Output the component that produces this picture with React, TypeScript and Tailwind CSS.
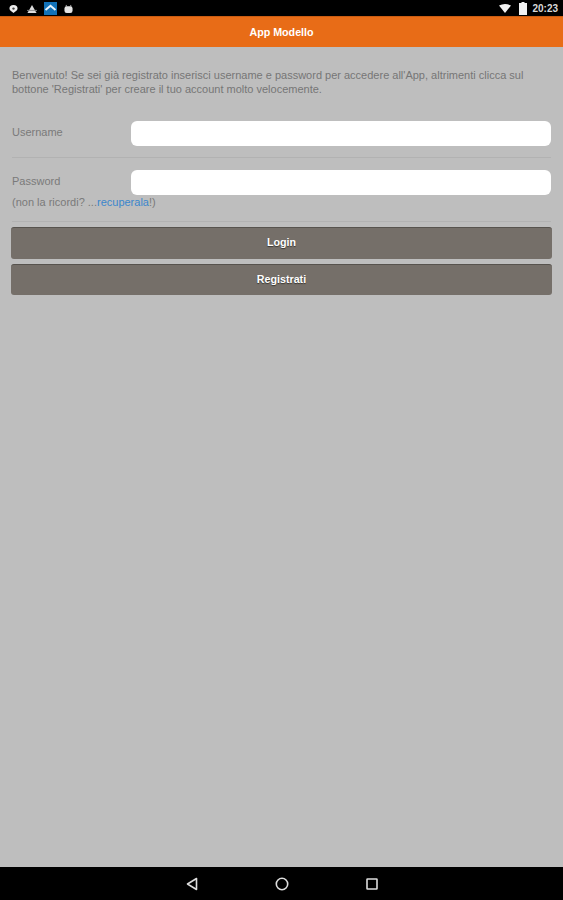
import React from 'react';

const font = 'font-["Liberation_Sans",Arial,sans-serif]';

const StatusBar = () => (
  <div className="h-[16px] bg-black flex items-center justify-between pl-[9px] pr-[5px] pt-[1px] shrink-0">
    <div className="flex items-center">
      {/* map pin */}
      <svg width="9" height="10" viewBox="0 0 10 10">
        <path d="M5 0.5a4.5 4 0 0 1 4.5 4c0 2.2-2.9 3.8-4.5 5-1.6-1.2-4.5-2.8-4.5-5a4.5 4 0 0 1 4.5-4z" fill="#eee" />
        <circle cx="5" cy="4.5" r="1.3" fill="#444" />
      </svg>
      {/* triangle */}
      <svg className="ml-[9px]" width="10" height="10" viewBox="0 0 11 10">
        <path d="M5.5 0.5 L10.5 9.5 L0.5 9.5 Z" fill="#ddd" />
        <rect x="0" y="6" width="11" height="1" fill="#888" />
      </svg>
      {/* app icon */}
      <svg className="ml-[7px]" width="13" height="13" viewBox="0 0 13 13">
        <rect width="13" height="13" fill="#1272b8" />
        <path d="M1.5 8 L6.5 3.8 L11.5 8" stroke="#e8f4fc" strokeWidth="2" fill="none" />
      </svg>
      {/* android */}
      <svg className="ml-[7px]" width="9" height="10" viewBox="0 0 10 10">
        <rect x="0.5" y="2" width="9" height="7.5" rx="2.5" fill="#e4e4e4" />
        <rect x="2" y="0.5" width="1" height="2" fill="#bbb" />
        <rect x="7" y="0.5" width="1" height="2" fill="#bbb" />
      </svg>
    </div>
    <div className="flex items-center">
      <svg width="12" height="9" viewBox="0 0 12 9">
        <path d="M0 1.5 Q6 -1.5 12 1.5 L6 9 Z" fill="#f2f2f2" />
      </svg>
      <svg className="ml-[8px]" width="8" height="13" viewBox="0 0 8 13">
        <path d="M2.5 0h3v1H8v12H0V1h2.5z" fill="#f2f2f2" />
      </svg>
      <span className="ml-[5px] text-[10px] leading-none font-bold text-[#d8d8d8]">20:23</span>
    </div>
  </div>
);

const Field = ({ label }: { label: string }) => (
  <div className="flex items-center">
    <span className="w-[119px] text-[11px] leading-[13px] text-[#7a7a7a] shrink-0 -mt-[2px]">{label}</span>
    <div className="flex-1 h-[25px] bg-white rounded-[6px]" />
  </div>
);

const ActionButton = ({ label, height }: { label: string; height: string }) => (
  <button
    className={`${height} w-full pb-[2px] bg-[#756f69] border-t border-t-[#57534e] rounded-[3px] text-white text-[10.7px] font-bold [text-shadow:0_1px_1px_#3a3733]`}
  >
    {label}
  </button>
);

export default function App() {
  return (
    <div className={`${font} w-[563px] h-[900px] flex flex-col bg-[#bebebe] overflow-hidden`}>
      <StatusBar />
      <header className="h-[31px] bg-[#e86c17] border-t border-t-[#c95c12] flex items-center justify-center shrink-0">
        <span className="text-white text-[10.7px] font-bold">App Modello</span>
      </header>

      <main className="flex-1 px-[12px] pt-[21px]">
        <p className="text-[11px] leading-[14px] text-[#767676]">
          Benvenuto! Se sei già registrato inserisci username e password per accedere all'App, altrimenti clicca sul
          bottone 'Registrati' per creare il tuo account molto velocemente.
        </p>

        <div className="mt-[25px] pb-[11px] border-b border-[#b2b2b2]">
          <Field label="Username" />
        </div>

        <div className="mt-[12px] pb-[12px] border-b border-[#b2b2b2]">
          <Field label="Password" />
          <p className="mt-[1px] text-[11px] leading-[13px] text-[#7a7a7a]">
            (non la ricordi? ...<span className="text-[#3b86cc]">recuperala</span>!)
          </p>
        </div>

        <div className="mt-[5px] -mx-[1px] flex flex-col gap-[5px]">
          <ActionButton label="Login" height="h-[32px]" />
          <ActionButton label="Registrati" height="h-[31px]" />
        </div>
      </main>

      <nav className="h-[33px] bg-black flex items-center justify-center shrink-0">
        <div className="w-[90px] flex justify-center">
          <svg width="12" height="14" viewBox="0 0 12 14">
            <path d="M10.5 1.5 V12.5 L1.5 7 Z" fill="none" stroke="#ddd" strokeWidth="1.6" strokeLinejoin="round" />
          </svg>
        </div>
        <div className="w-[90px] flex justify-center">
          <svg width="14" height="14" viewBox="0 0 14 14">
            <circle cx="7" cy="7" r="5.7" fill="none" stroke="#ddd" strokeWidth="1.6" />
          </svg>
        </div>
        <div className="w-[90px] flex justify-center">
          <svg width="12" height="12" viewBox="0 0 12 12">
            <rect x="1" y="1" width="10" height="10" rx="0.5" fill="none" stroke="#ddd" strokeWidth="1.6" />
          </svg>
        </div>
      </nav>
    </div>
  );
}
